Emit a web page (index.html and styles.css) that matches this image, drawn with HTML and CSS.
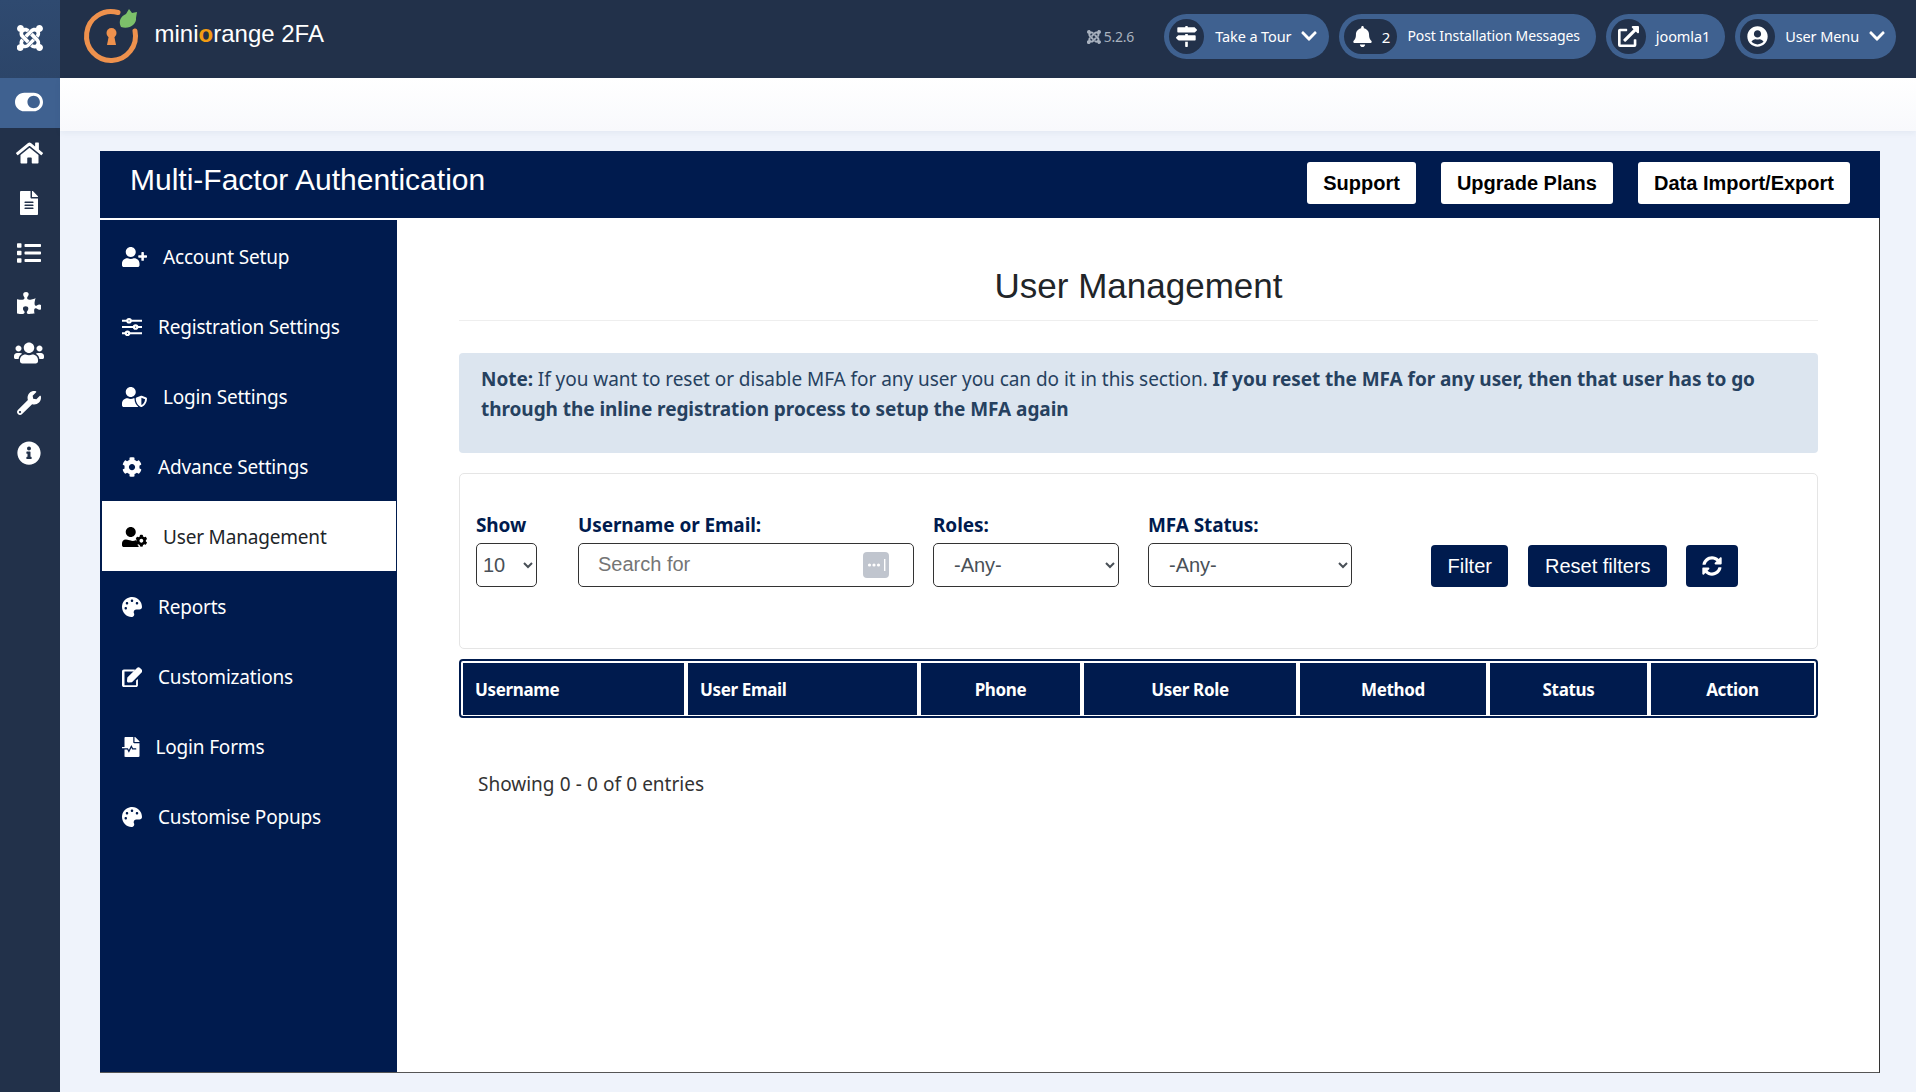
FILE: index.html
```html
<!DOCTYPE html>
<html lang="en">
<head>
<meta charset="utf-8">
<title>miniOrange 2FA</title>
<link rel="stylesheet" href="styles.css">
</head>
<body>
<svg class="defs" aria-hidden="true">
<defs>
<symbol id="i-joomla" viewBox="0 0 448 512"><path d="M.6 92.1C.6 58.8 27.4 32 60.4 32c30 0 54.5 21.9 59.2 50.2 32.6-7.6 67.1.6 96.5 30l-44.3 44.3c-20.5-20.5-42.6-16.3-55.4-3.5-14.3 14.3-14.3 37.9 0 52.2l99.5 99.5-44 44.3c-87.7-87.2-49.7-49.7-99.8-99.7-26.8-26.5-35-64.8-24.8-98.9C20.4 144.6.6 120.7.6 92.1zm129.5 116.4l44.3 44.3c10-10 89.7-89.7 99.7-99.8 14.3-14.3 37.6-14.3 51.9 0 12.8 12.8 17 35-3.5 55.4l44 44.3c31.2-31.2 38.5-67.6 28.9-101.2 29.2-4.1 51.9-29.2 51.9-59.5 0-33.2-26.8-60.1-59.8-60.1-30.3 0-55.4 22.5-59.5 51.6-33.8-9.9-71.7-1.5-98.3 25.1-18.3 19.1-71.1 71.5-99.6 99.9zm266.3 152.2c8.2-32.7-.9-68.5-26.3-93.9-11.8-12-.6-.8-99.5-99.7l-44.3 44.3 99.7 99.7c14.3 14.3 14.3 37.6 0 51.9-12.8 12.8-35 17-55.4-3.5l-44 44.3c27.6 30.2 68 38.8 102.7 28 5.5 27.4 29.7 48.1 58.9 48.1 33 0 59.8-26.8 59.8-60.1 0-30.2-22.5-55-51.6-58.9zm-84.3-53.1l-44-44.3c-87.2 87.4-50.4 50.4-99.7 99.8-14.3 14.3-37.6 14.3-51.9 0-13.1-13.4-16.9-35.3 3.2-55.4l-44-44.3c-30.2 30.2-38 65.2-29.5 98.3-29.6 3.9-52.3 29.2-52.3 59.5 0 33.2 26.8 60.1 60.1 60.1 30.3 0 55.1-22.5 59.2-51.6 33.9 9.9 71.4 1.5 98.2-25.1 50-50 12.6-12.6 100.7-100.5z"/></symbol>
<symbol id="i-chev" viewBox="0 0 448 512"><path d="M207.029 381.476L12.686 187.132c-9.373-9.373-9.373-24.569 0-33.941l22.667-22.667c9.357-9.357 24.522-9.375 33.901-.04L224 284.505l154.745-154.021c9.379-9.335 24.544-9.317 33.901.04l22.667 22.667c9.373 9.373 9.373 24.569 0 33.941L240.971 381.476c-9.373 9.372-24.569 9.372-33.942 0z"/></symbol>
<symbol id="i-palette" viewBox="0 0 512 512"><path d="M204.3 5C104.9 24.4 24.8 104.3 5.2 203.4c-37 187 131.7 326.4 258.8 306.7 41.2-6.4 61.4-54.6 42.5-91.7-23.1-45.4 9.9-98.4 60.9-98.4h79.7c35.8 0 64.8-29.6 64.9-65.3C511.5 97.1 368.1-26.9 204.3 5zM96 320c-17.7 0-32-14.3-32-32s14.3-32 32-32 32 14.3 32 32-14.3 32-32 32zm32-128c-17.7 0-32-14.3-32-32s14.3-32 32-32 32 14.3 32 32-14.3 32-32 32zm128-64c-17.7 0-32-14.3-32-32s14.3-32 32-32 32 14.3 32 32-14.3 32-32 32zm128 64c-17.7 0-32-14.3-32-32s14.3-32 32-32 32 14.3 32 32-14.3 32-32 32z"/></symbol>
</defs>
</svg>

<header class="topbar">
  <div class="brand-square"><svg class="brand-joomla"><use href="#i-joomla"/></svg></div>
  <div class="logo">
    <svg class="logo-mark" viewBox="0 0 60 60">
      <path class="logo-ring" d="M37 6.5A24.5 24.5 0 1 0 54 25"/>
      <circle class="logo-key" cx="30.5" cy="27" r="5"/>
      <path class="logo-key" d="M28 29h5l2 10h-9z"/>
      <path class="logo-leaf" d="M40 21c-3-6 0-11 5-13l3-5 3 4 5-1-1 6c1 6-7 12-15 9z"/>
    </svg>
    <span class="logo-text">mini<b>o</b>range 2FA</span>
  </div>
  <div class="top-actions">
    <span class="version"><svg class="version-icon"><use href="#i-joomla"/></svg>5.2.6</span>
    <a class="pill pill-tour">
      <span class="pill-icon"><svg class="pi" viewBox="0 0 512 512"><path d="M507.31 84.69L464 41.37c-6-6-14.14-9.37-22.63-9.37H288V16c0-8.84-7.16-16-16-16h-32c-8.84 0-16 7.16-16 16v16H56c-13.25 0-24 10.75-24 24v80c0 13.25 10.75 24 24 24h385.37c8.49 0 16.62-3.37 22.63-9.37l43.31-43.31c6.25-6.26 6.25-16.38 0-22.63zM224 496c0 8.84 7.16 16 16 16h32c8.84 0 16-7.16 16-16V384h-64v112zm232-272H288v-32h-64v32H70.63c-8.49 0-16.62 3.37-22.63 9.37L4.69 276.69c-6.25 6.25-6.25 16.38 0 22.63L48 342.63c6 6 14.14 9.37 22.63 9.37H456c13.25 0 24-10.75 24-24v-80c0-13.25-10.75-24-24-24z"/></svg></span>
      <span class="pill-text">Take a Tour</span>
      <svg class="chev"><use href="#i-chev"/></svg>
    </a>
    <a class="pill pill-post">
      <span class="pill-icon pill-icon-wide"><svg class="pi" viewBox="0 0 448 512"><path d="M224 512c35.32 0 63.97-28.65 63.97-64H160.03c0 35.35 28.65 64 63.97 64zm215.39-149.71c-19.32-20.76-55.47-51.99-55.47-154.29 0-77.7-54.48-139.9-127.94-155.16V32c0-17.67-14.32-32-31.98-32s-31.98 14.33-31.98 32v20.84C118.56 68.1 64.08 130.3 64.08 208c0 102.3-36.15 133.53-55.47 154.29-6 6.45-8.66 14.16-8.61 21.71.11 16.4 12.98 32 32.1 32h383.8c19.12 0 32-15.6 32.1-32 .05-7.55-2.61-15.27-8.61-21.71z"/></svg>2</span>
      <span class="pill-text">Post Installation Messages</span>
    </a>
    <a class="pill pill-site">
      <span class="pill-icon"><svg class="pi" viewBox="0 0 512 512"><path d="M432,320H400a16,16,0,0,0-16,16V448H64V128H208a16,16,0,0,0,16-16V80a16,16,0,0,0-16-16H48A48,48,0,0,0,0,112V464a48,48,0,0,0,48,48H400a48,48,0,0,0,48-48V336A16,16,0,0,0,432,320ZM488,0h-128c-21.37,0-32.05,25.91-17,41l35.73,35.73L135,320.37a24,24,0,0,0,0,34L157.67,377a24,24,0,0,0,34,0L435.28,133.32,471,169c15,15,41,4.5,41-17V24A24,24,0,0,0,488,0Z"/></svg></span>
      <span class="pill-text">joomla1</span>
    </a>
    <a class="pill pill-user">
      <span class="pill-icon"><svg class="pi" viewBox="0 0 496 512"><path d="M248 8C111 8 0 119 0 256s111 248 248 248 248-111 248-248S385 8 248 8zm0 96c48.6 0 88 39.4 88 88s-39.4 88-88 88-88-39.4-88-88 39.4-88 88-88zm0 344c-58.7 0-111.3-26.6-146.5-68.2 18.8-35.4 55.6-59.8 98.5-59.8 2.4 0 4.8.4 7.1 1.1 13 4.2 26.6 6.9 40.9 6.9 14.3 0 28-2.7 40.9-6.9 2.3-.7 4.7-1.1 7.1-1.1 42.9 0 79.7 24.4 98.5 59.8C359.3 421.4 306.7 448 248 448z"/></svg></span>
      <span class="pill-text">User Menu</span>
      <svg class="chev"><use href="#i-chev"/></svg>
    </a>
  </div>
</header>

<div class="shell">
  <nav class="rail">
    <a class="rail-toggle"><svg class="rail-icon" viewBox="0 0 576 512"><path d="M384 64H192C86 64 0 150 0 256s86 192 192 192h192c106 0 192-86 192-192S490 64 384 64zm0 320c-70.8 0-128-57.3-128-128 0-70.8 57.3-128 128-128 70.8 0 128 57.3 128 128 0 70.8-57.3 128-128 128z"/></svg></a>
    <a class="rail-item"><svg class="rail-icon" viewBox="0 0 576 512"><path d="M280.37 148.26L96 300.11V464a16 16 0 0 0 16 16l112.06-.29a16 16 0 0 0 15.92-16V368a16 16 0 0 1 16-16h64a16 16 0 0 1 16 16v95.64a16 16 0 0 0 16 16.05L464 480a16 16 0 0 0 16-16V300L295.67 148.26a12.19 12.19 0 0 0-15.3 0zM571.6 251.47L488 182.56V44.05a12 12 0 0 0-12-12h-56a12 12 0 0 0-12 12v72.61L318.47 43a48 48 0 0 0-61 0L4.34 251.47a12 12 0 0 0-1.6 16.9l25.5 31A12 12 0 0 0 45.15 301l235.22-193.74a12.19 12.19 0 0 1 15.3 0L530.9 301a12 12 0 0 0 16.9-1.6l25.5-31a12 12 0 0 0-1.7-16.93z"/></svg></a>
    <a class="rail-item"><svg class="rail-icon" viewBox="0 0 384 512"><path d="M224 136V0H24C10.7 0 0 10.7 0 24v464c0 13.3 10.7 24 24 24h336c13.3 0 24-10.7 24-24V160H248c-13.2 0-24-10.8-24-24zm64 236c0 6.6-5.4 12-12 12H108c-6.6 0-12-5.4-12-12v-8c0-6.6 5.4-12 12-12h168c6.6 0 12 5.4 12 12v8zm0-64c0 6.6-5.4 12-12 12H108c-6.6 0-12-5.4-12-12v-8c0-6.6 5.4-12 12-12h168c6.6 0 12 5.4 12 12v8zm0-72v8c0 6.6-5.4 12-12 12H108c-6.6 0-12-5.4-12-12v-8c0-6.6 5.4-12 12-12h168c6.6 0 12 5.4 12 12zm96-114.1v6.1H256V0h6.1c6.4 0 12.5 2.5 17 7l97.9 98c4.5 4.5 7 10.6 7 16.9z"/></svg></a>
    <a class="rail-item"><svg class="rail-icon" viewBox="0 0 512 512"><path d="M80 368H16a16 16 0 0 0-16 16v64a16 16 0 0 0 16 16h64a16 16 0 0 0 16-16v-64a16 16 0 0 0-16-16zm0-320H16A16 16 0 0 0 0 64v64a16 16 0 0 0 16 16h64a16 16 0 0 0 16-16V64a16 16 0 0 0-16-16zm0 160H16a16 16 0 0 0-16 16v64a16 16 0 0 0 16 16h64a16 16 0 0 0 16-16v-64a16 16 0 0 0-16-16zm416 176H176a16 16 0 0 0-16 16v32a16 16 0 0 0 16 16h320a16 16 0 0 0 16-16v-32a16 16 0 0 0-16-16zm0-320H176a16 16 0 0 0-16 16v32a16 16 0 0 0 16 16h320a16 16 0 0 0 16-16V80a16 16 0 0 0-16-16zm0 160H176a16 16 0 0 0-16 16v32a16 16 0 0 0 16 16h320a16 16 0 0 0 16-16v-32a16 16 0 0 0-16-16z"/></svg></a>
    <a class="rail-item"><svg class="rail-icon rail-icon-puzzle" viewBox="0 0 576 512"><path d="M519.442 288.651c-41.519 0-59.5 31.593-82.058 31.593C377.409 320.244 432 144 432 144s-196.288 80-196.288-3.297c0-35.827 36.288-46.25 36.288-85.985C272 19.216 243.885 0 210.539 0c-34.654 0-66.366 18.891-66.366 56.346 0 41.364 31.711 59.277 31.711 81.75C175.885 207.719 0 166.758 0 166.758v333.237s178.635 41.047 178.635-28.662c0-22.473-40-40.107-40-81.471 0-37.456 29.25-56.346 63.577-56.346 33.673 0 61.788 19.216 61.788 54.717 0 39.735-36.288 50.158-36.288 85.985 0 60.803 129.675 25.73 181.23 25.73 0 0-34.725-120.101 25.827-120.101 35.962 0 46.222 36.152 86.308 36.152C556.712 416 576 387.99 576 354.443c0-34.199-18.962-65.792-56.558-65.792z"/></svg></a>
    <a class="rail-item"><svg class="rail-icon" viewBox="0 0 640 512"><path d="M96 224c35.3 0 64-28.7 64-64s-28.7-64-64-64-64 28.7-64 64 28.7 64 64 64zm448 0c35.3 0 64-28.7 64-64s-28.7-64-64-64-64 28.7-64 64 28.7 64 64 64zm32 32h-64c-17.6 0-33.5 7.1-45.1 18.6 40.3 22.1 68.9 62 75.1 109.4h66c17.7 0 32-14.3 32-32v-32c0-35.3-28.7-64-64-64zm-256 0c61.9 0 112-50.1 112-112S381.9 32 320 32 208 82.1 208 144s50.1 112 112 112zm76.8 32h-8.3c-20.8 10-43.9 16-68.5 16s-47.6-6-68.5-16h-8.3C179.6 288 128 339.6 128 403.2V432c0 26.5 21.5 48 48 48h288c26.5 0 48-21.5 48-48v-28.8c0-63.6-51.6-115.2-115.2-115.2zm-223.7-13.4C161.5 263.1 145.6 256 128 256H64c-35.3 0-64 28.7-64 64v32c0 17.7 14.3 32 32 32h65.9c6.3-47.4 34.9-87.3 75.2-109.4z"/></svg></a>
    <a class="rail-item"><svg class="rail-icon" viewBox="0 0 512 512"><path d="M507.73 109.1c-2.24-9.03-13.54-12.09-20.12-5.51l-74.36 74.36-67.88-11.31-11.31-67.88 74.36-74.36c6.62-6.62 3.43-17.9-5.66-20.16-47.38-11.74-99.55.91-136.58 37.93-39.64 39.64-50.55 97.1-34.05 147.2L18.74 402.76c-24.99 24.99-24.99 65.51 0 90.5 24.99 24.99 65.51 24.99 90.5 0l213.21-213.21c50.12 16.71 107.47 5.68 147.37-34.22 37.07-37.07 49.7-89.32 37.91-136.73zM64 472c-13.25 0-24-10.75-24-24 0-13.26 10.75-24 24-24s24 10.74 24 24c0 13.25-10.75 24-24 24z"/></svg></a>
    <a class="rail-item"><svg class="rail-icon" viewBox="0 0 512 512"><path d="M256 8C119.043 8 8 119.083 8 256c0 136.997 111.043 248 248 248s248-111.003 248-248C504 119.083 392.957 8 256 8zm0 110c23.196 0 42 18.804 42 42s-18.804 42-42 42-42-18.804-42-42 18.804-42 42-42zm56 254c0 6.627-5.373 12-12 12h-88c-6.627 0-12-5.373-12-12v-24c0-6.627 5.373-12 12-12h12v-64h-12c-6.627 0-12-5.373-12-12v-24c0-6.627 5.373-12 12-12h64c6.627 0 12 5.373 12 12v100h12c6.627 0 12 5.373 12 12v24z"/></svg></a>
  </nav>

  <div class="page">
    <div class="subbar"></div>
    <section class="panel">
      <div class="panel-head">
        <h1 class="panel-title">Multi-Factor Authentication</h1>
        <div class="head-actions">
          <a class="head-btn">Support</a>
          <a class="head-btn">Upgrade Plans</a>
          <a class="head-btn">Data Import/Export</a>
        </div>
      </div>
      <div class="panel-body">
        <ul class="side">
          <li class="side-item"><svg class="side-icon" viewBox="0 0 640 512"><path d="M624 208h-64v-64c0-8.8-7.2-16-16-16h-32c-8.8 0-16 7.2-16 16v64h-64c-8.8 0-16 7.2-16 16v32c0 8.8 7.2 16 16 16h64v64c0 8.8 7.2 16 16 16h32c8.8 0 16-7.2 16-16v-64h64c8.8 0 16-7.2 16-16v-32c0-8.8-7.2-16-16-16zm-400 48c70.7 0 128-57.3 128-128S294.7 0 224 0 96 57.3 96 128s57.3 128 128 128zm89.6 32h-16.7c-22.2 10.2-46.9 16-72.9 16s-50.6-5.8-72.9-16h-16.7C60.2 288 0 348.2 0 422.4V464c0 26.5 21.5 48 48 48h352c26.5 0 48-21.5 48-48v-41.6c0-74.2-60.2-134.4-134.4-134.4z"/></svg>Account Setup</li>
          <li class="side-item"><svg class="side-icon side-icon-lines" viewBox="0 0 512 512"><path d="M0 96h512M0 256h512M0 416h512"/><circle cx="180" cy="96" r="44"/><circle cx="348" cy="256" r="44"/><circle cx="140" cy="416" r="44"/></svg>Registration Settings</li>
          <li class="side-item"><svg class="side-icon" viewBox="0 0 640 512"><path d="M622.3 271.1l-115.2-45c-4.1-1.6-12.6-3.7-22.2 0l-115.2 45c-10.7 4.2-17.7 14-17.7 24.9 0 111.6 68.7 188.8 132.9 213.9 9.6 3.7 18 1.6 22.2 0C558.4 489.9 640 420.5 640 296c0-10.9-7-20.7-17.7-24.9zM496 462.4V273.3l95.5 37.3c-5.6 87.1-60.9 135.4-95.5 151.8zM224 256c70.7 0 128-57.3 128-128S294.7 0 224 0 96 57.3 96 128s57.3 128 128 128zm96 40c0-2.5.8-4.7 1.1-7.2-2.5-.1-4.9-.8-7.5-.8h-16.7c-22.2 10.2-46.9 16-72.9 16s-50.6-5.8-72.9-16h-16.7C60.2 288 0 348.2 0 422.4V464c0 26.5 21.5 48 48 48h352c6.8 0 13.3-1.5 19.2-4-54-42.9-99.2-116.7-99.2-212z"/></svg>Login Settings</li>
          <li class="side-item"><svg class="side-icon" viewBox="0 0 512 512"><path d="M487.4 315.7l-42.6-24.6c4.3-23.2 4.3-47 0-70.2l42.6-24.6c4.9-2.8 7.1-8.6 5.5-14-11.1-35.6-30-67.8-54.7-94.6-3.8-4.1-10-5.1-14.8-2.3L380.8 110c-17.9-15.4-38.5-27.3-60.8-35.1V25.8c0-5.6-3.9-10.5-9.4-11.7-36.7-8.2-74.3-7.8-109.2 0-5.5 1.2-9.4 6.1-9.4 11.7V75c-22.2 7.9-42.8 19.8-60.8 35.1L88.7 85.5c-4.9-2.8-11-1.9-14.8 2.3-24.7 26.7-43.6 58.9-54.7 94.6-1.7 5.4.6 11.2 5.5 14L67.3 221c-4.3 23.2-4.3 47 0 70.2l-42.6 24.6c-4.9 2.8-7.1 8.6-5.5 14 11.1 35.6 30 67.8 54.7 94.6 3.8 4.1 10 5.1 14.8 2.3l42.6-24.6c17.9 15.4 38.5 27.3 60.8 35.1v49.2c0 5.6 3.9 10.5 9.4 11.7 36.7 8.2 74.3 7.8 109.2 0 5.5-1.2 9.4-6.1 9.4-11.7v-49.2c22.2-7.9 42.8-19.8 60.8-35.1l42.6 24.6c4.9 2.8 11 1.9 14.8-2.3 24.7-26.7 43.6-58.9 54.7-94.6 1.5-5.5-.7-11.3-5.6-14.1zM256 336c-44.1 0-80-35.9-80-80s35.9-80 80-80 80 35.9 80 80-35.9 80-80 80z"/></svg>Advance Settings</li>
          <li class="side-item side-item-active"><svg class="side-icon" viewBox="0 0 640 512"><path d="M610.5 373.3c2.6-14.1 2.6-28.5 0-42.6l25.8-14.9c3-1.7 4.3-5.2 3.3-8.5-6.7-21.6-18.2-41.2-33.2-57.4-2.3-2.5-6-3.1-9-1.4l-25.8 14.9c-10.9-9.3-23.4-16.5-36.9-21.3v-29.8c0-3.4-2.4-6.4-5.7-7.1-22.3-5-45-4.8-66.2 0-3.3.7-5.7 3.7-5.7 7.1v29.8c-13.5 4.8-26 12-36.9 21.3l-25.8-14.9c-2.9-1.7-6.7-1.1-9 1.4-15 16.2-26.5 35.8-33.2 57.4-1 3.3.4 6.8 3.3 8.5l25.8 14.9c-2.6 14.1-2.6 28.5 0 42.6l-25.8 14.9c-3 1.7-4.3 5.2-3.3 8.5 6.7 21.6 18.2 41.1 33.2 57.4 2.3 2.5 6 3.1 9 1.4l25.8-14.9c10.9 9.3 23.4 16.5 36.9 21.3v29.8c0 3.4 2.4 6.4 5.7 7.1 22.3 5 45 4.8 66.2 0 3.3-.7 5.7-3.7 5.7-7.1v-29.8c13.5-4.8 26-12 36.9-21.3l25.8 14.9c2.9 1.7 6.7 1.1 9-1.4 15-16.2 26.5-35.8 33.2-57.4 1-3.3-.4-6.8-3.3-8.5l-25.8-14.9zM496 400.5c-26.8 0-48.5-21.8-48.5-48.5s21.8-48.5 48.5-48.5 48.5 21.8 48.5 48.5-21.7 48.5-48.5 48.5zM224 256c70.7 0 128-57.3 128-128S294.7 0 224 0 96 57.3 96 128s57.3 128 128 128zm201.2 226.5c-2.3 0-4.6-.3-6.8-1-3.6-1.1-6.8-3-9.5-5.7-15.7-17-27.8-37.8-35-60.4-2.6-8.2.6-17.2 8.2-21.6l7.9-4.6c-.4-3.3-.4-6.7 0-10l-7.9-4.6c-7.5-4.3-10.8-13.4-8.2-21.6 1.2-3.8 3-7.4 4.7-11-4-.6-8-.9-12.2-.9h-16.7c-22.2 10.2-46.9 16-72.9 16s-50.6-5.8-72.9-16h-16.7C60.2 288 0 348.2 0 422.4V464c0 26.5 21.5 48 48 48h352c10.1 0 19.5-3.2 27.2-8.5-.7-3.2-2-21-2-21z"/></svg>User Management</li>
          <li class="side-item"><svg class="side-icon"><use href="#i-palette"/></svg>Reports</li>
          <li class="side-item"><svg class="side-icon" viewBox="0 0 512 512"><path d="M362.3 344.9l32-32c5-5 13.7-1.5 13.7 5.7V464c0 26.5-21.5 48-48 48H48c-26.5 0-48-21.5-48-48V112c0-26.5 21.5-48 48-48h273.5c7.1 0 10.7 8.6 5.7 13.7l-32 32c-1.5 1.5-3.5 2.3-5.7 2.3H64v352h296V350.5c0-2.1.8-4.1 2.3-5.6zM502 142L255 389l-85 9.4c-24.7 2.7-45.6-18-42.9-42.9l9.4-85L383.4 23.6c21.5-21.5 56.4-21.5 77.9 0l40.7 40.7c21.5 21.6 21.5 56.5 0 77.7z"/></svg>Customizations</li>
          <li class="side-item"><svg class="side-icon" viewBox="0 0 448 512"><path d="M288 136V0H88C74.7 0 64 10.7 64 24v232H8c-4.4 0-8 3.6-8 8v16c0 4.4 3.6 8 8 8h140.9c3 0 5.8 1.7 7.2 4.4l19.9 39.8 56.8-113.7c2.9-5.9 11.4-5.9 14.3 0l34.7 69.5H352c8.8 0 16 7.2 16 16s-7.2 16-16 16h-89.9L240 275.8l-56.8 113.7c-2.9 5.9-11.4 5.9-14.3 0L134.1 320H64v168c0 13.3 10.7 24 24 24h336c13.3 0 24-10.7 24-24V160H312c-13.2 0-24-10.8-24-24zm153-31L343.1 7c-4.5-4.5-10.6-7-17-7H320v128h128v-6.1c0-6.3-2.5-12.4-7-16.9z"/></svg>Login Forms</li>
          <li class="side-item"><svg class="side-icon"><use href="#i-palette"/></svg>Customise Popups</li>
        </ul>
        <main class="content">
          <h2 class="content-title">User Management</h2>
          <div class="note"><b>Note:</b> If you want to reset or disable MFA for any user you can do it in this section. <b>If you reset the MFA for any user, then that user has to go through the inline registration process to setup the MFA again</b></div>
          <form class="filters">
            <label class="field field-show"><span class="field-label">Show</span>
              <select class="control"><option>10</option></select></label>
            <label class="field field-search"><span class="field-label">Username or Email:</span>
              <span class="search-wrap"><input class="control search" type="text" placeholder="Search for">
              <svg class="search-key" viewBox="0 0 26 26"><rect width="26" height="26" rx="4"/><circle cx="6.5" cy="13" r="1.6"/><circle cx="11" cy="13" r="1.6"/><circle cx="15.5" cy="13" r="1.6"/><rect x="21" y="7" width="1.4" height="12"/></svg></span></label>
            <label class="field field-roles"><span class="field-label">Roles:</span>
              <select class="control pad"><option>-Any-</option></select></label>
            <label class="field field-status"><span class="field-label">MFA Status:</span>
              <select class="control pad"><option>-Any-</option></select></label>
            <div class="filter-btns">
              <button class="btn" type="button">Filter</button>
              <button class="btn" type="button">Reset filters</button>
              <button class="btn btn-icon" type="button" aria-label="Refresh"><svg class="sync" viewBox="0 0 512 512"><path d="M370.72 133.28C339.458 104.008 298.888 87.962 255.848 88c-77.458.068-144.328 53.178-162.791 126.85-1.344 5.363-6.122 9.15-11.651 9.15H24.103c-7.498 0-13.194-6.807-11.807-14.176C33.933 94.924 134.813 8 256 8c66.448 0 126.791 26.136 171.315 68.685L463.03 40.97C478.149 25.851 504 36.559 504 57.941V192c0 13.255-10.745 24-24 24H345.941c-21.382 0-32.09-25.851-16.971-40.971l41.75-41.749zM32 296h134.059c21.382 0 32.09 25.851 16.971 40.971l-41.75 41.75c31.262 29.273 71.835 45.319 114.876 45.28 77.418-.07 144.315-53.144 162.787-126.849 1.344-5.363 6.122-9.15 11.651-9.15h57.304c7.498 0 13.194 6.807 11.807 14.176C478.067 417.076 377.187 504 256 504c-66.448 0-126.791-26.136-171.315-68.685L48.97 471.03C33.851 486.149 8 475.441 8 454.059V320c0-13.255 10.745-24 24-24z"/></svg></button>
            </div>
          </form>
          <div class="table-box">
            <table class="users">
              <thead><tr>
                <th class="left c1">Username</th><th class="left c2">User Email</th><th class="c3">Phone</th><th class="c4">User Role</th><th class="c5">Method</th><th class="c6">Status</th><th class="c7">Action</th>
              </tr></thead>
            </table>
          </div>
          <p class="entries">Showing 0 - 0 of 0 entries</p>
        </main>
      </div>
    </section>
  </div>
</div>
</body>
</html>
```

FILE: styles.css
```css
* { box-sizing: border-box; }
html, body { margin: 0; height: 1092px; overflow: hidden; }
body {
  display: flex;
  flex-direction: column;
  background: #eff3fb;
  font-family: "Noto Sans", "Open Sans", sans-serif;
  color: #212529;
}
.defs { display: none; }

/* top bar */
.topbar { height: 78px; flex: none; display: flex; align-items: center; background: #22314a; }
.brand-square {
  width: 60px; height: 78px; flex: none;
  display: flex; align-items: center; justify-content: center;
  background: linear-gradient(#2f4a70, #2c4569);
}
.brand-joomla { width: 26px; height: 30px; fill: #fff; margin-top: -2px; }
.logo { display: flex; align-items: center; margin-left: 21px; }
.logo-mark { width: 60px; height: 60px; flex: none; margin-top: -6px; }
.logo-ring { fill: none; stroke: #ee914d; stroke-width: 5; stroke-linecap: round; }
.logo-key { fill: #ee914d; }
.logo-leaf { fill: #7cc06a; }
.logo-text { margin-left: 13.5px; margin-top: -10px; font: 24px/30px "Liberation Sans", Arial, sans-serif; color: #fff; }
.logo-text b { color: #f39c12; font-weight: 700; }
.top-actions { margin: -5px 20px 0 auto; display: flex; align-items: center; gap: 10px; }
.version { display: flex; align-items: center; gap: 3px; margin-right: 20px; font-size: 14px; color: #a9b2bf; letter-spacing: -.2px; }
.version-icon { width: 14px; height: 16px; fill: #a9b2bf; }
.pill {
  height: 45px; border-radius: 23px;
  display: flex; align-items: center;
  padding: 0 12px 0 5px;
  background: #3f6190; color: #fff;
  font-size: 14.5px; letter-spacing: -.1px;
}
.pill-tour .pill-text { margin-left: 11px; }
.pill-post { padding-right: 16px; font-size: 14px; }
.pill-site { padding-right: 15px; }
.pill-user { padding-right: 11px; }
.pill-icon {
  width: 35px; height: 35px; border-radius: 18px; flex: none;
  display: flex; align-items: center; justify-content: center; gap: 9px;
  background: #22314a; color: #fff; font-size: 15px;
}
.pill-icon-wide { width: 53px; }
.pi { width: 21px; height: 21px; fill: #fff; flex: none; }
.pill-text { margin: -2px 0 0 10px; white-space: nowrap; }
.chev { width: 16px; height: 18px; margin: -2px 0 0 10px; fill: #fff; flex: none; }

/* shell */
.shell { flex: 1; display: flex; min-height: 0; }
.rail { width: 60px; flex: none; background: #22314a; display: flex; flex-direction: column; }
.rail-toggle { height: 50px; flex: none; display: flex; align-items: center; justify-content: center; padding: 0 2px 2px 0; background: #3f6190; }
.rail-item { height: 50px; flex: none; display: flex; align-items: center; justify-content: center; padding-right: 2px; }
.rail-icon { height: 24px; width: auto; max-width: 30px; fill: #fff; flex: none; }
.rail-icon[viewBox="0 0 576 512"] { aspect-ratio: 9 / 8; }
.rail-icon[viewBox="0 0 640 512"] { aspect-ratio: 5 / 4; }
.rail-icon-puzzle { height: 22px; }
.rail-toggle .rail-icon { width: 28px; height: 28px; max-width: none; }

.page { flex: 1; min-width: 0; display: flex; flex-direction: column; }
.subbar { height: 53px; flex: none; background: linear-gradient(#fff, #f8f9fc); box-shadow: 0 2px 6px rgba(40, 60, 110, .06); }
.panel { flex: 1; min-height: 0; margin: 20px 36px 19px 40px; display: flex; flex-direction: column; }
.panel-head { height: 67px; flex: none; display: flex; align-items: center; justify-content: space-between; padding: 0 30px; background: #001b4e; }
.panel-title { margin: -10px 0 0; font: 400 30px/36px "Liberation Sans", Arial, sans-serif; color: #fff; }
.head-actions { display: flex; gap: 25px; margin-top: -3px; }
.head-btn {
  height: 42px; padding: 0 16px; border-radius: 3px;
  display: flex; align-items: center;
  background: #fff; color: #000;
  font: 700 20px/42px "Liberation Sans", Arial, sans-serif;
}
.panel-body { flex: 1; min-height: 0; display: flex; background: #fff; border-right: 1px solid #333; border-bottom: 1px solid #555; }

/* side menu */
.side {
  width: 297px; flex: none; margin: 2px 0 0; padding: 2px 1px 0 2px; list-style: none;
  background: #001b4e;
}
.side-item {
  height: 70px; display: flex; align-items: center; gap: 16px; padding-left: 20px;
  color: #fff; font-size: 19px; letter-spacing: -.18px;
}
.side-item-active { margin: -1px 0 1px; padding-top: 2px; background: #fff; color: #212529; }
.side-icon { height: 20px; width: auto; fill: #fff; flex: none; aspect-ratio: 1 / 1; }
.side-icon[viewBox="0 0 640 512"] { aspect-ratio: 5 / 4; }
.side-icon[viewBox="0 0 448 512"] { aspect-ratio: 7 / 8; }
.side-item-active .side-icon { fill: #000; }
.side-icon-lines { fill: #001b4e; stroke: #fff; stroke-width: 56; }

/* content */
.content { flex: 1; min-width: 0; padding: 47px 61px 0 62px; }
.content-title {
  margin: 0 0 32px; padding-bottom: 13px;
  border-bottom: 1px solid #eee;
  text-align: center;
  font: 400 35px/42px "Liberation Sans", Arial, sans-serif; color: #212529;
}
.note {
  height: 100px; padding: 11px 22px 0; border-radius: 4px;
  background: #dce5ef; color: #26415f;
  font-size: 19px; line-height: 30px; letter-spacing: -.055px;
}
.filters {
  height: 176px; margin-top: 20px; padding: 39px 16px 0;
  border: 1px solid #e5e5e5; border-radius: 5px;
  display: flex; align-items: flex-start;
}
.field { display: flex; flex-direction: column; flex: none; }
.field-label { height: 30px; line-height: 24px; font-size: 19px; font-weight: 700; letter-spacing: -.1px; color: #001b4e; white-space: nowrap; }
.field-show { width: 61px; }
.field-search { width: 336px; margin-left: 41px; }
.field-roles { width: 186px; margin-left: 19px; }
.field-status { width: 204px; margin-left: 29px; }
.control {
  width: 100%; height: 44px; border: 1px solid #333; border-radius: 5px; background: #fff;
  padding: 0 0 0 2px; color: #495057;
  font: 20px "Liberation Sans", Arial, sans-serif;
}
.control.pad { padding-left: 16px; }
.search { padding: 0 0 2px 19px; }
.search::placeholder { color: #757575; opacity: 1; }
.search-wrap { position: relative; display: block; }
.search-key { position: absolute; right: 25px; top: 9px; width: 26px; height: 26px; }
.search-key rect:first-child { fill: #c0c5ce; }
.search-key circle, .search-key rect + circle ~ rect { fill: #fff; }
.filter-btns { margin: 32px 0 0 79px; display: flex; gap: 20px; }
.btn {
  height: 42px; padding: 0 16.5px; border: 0; border-radius: 4px;
  background: #001b4e; color: #fff;
  font: 20px "Liberation Sans", Arial, sans-serif;
}
.btn-icon { width: 52px; margin-left: -1px; padding: 0; display: flex; align-items: center; justify-content: center; }
.sync { width: 20px; height: 20px; fill: #fff; }
.table-box { height: 59px; margin-top: 10px; border: 2px solid #001b4e; border-radius: 4px; overflow: hidden; }
.users { width: 1359px; margin: 0 -2px; table-layout: fixed; border-collapse: separate; border-spacing: 4px 2px; }
.users th {
  height: 52px; padding: 0; background: #001b4e; color: #fff;
  font-size: 17px; font-weight: 700; letter-spacing: -.35px; text-align: center;
}
.users th.left { text-align: left; padding-left: 12px; }
.c1 { width: 221px; } .c2 { width: 229px; } .c3 { width: 159px; } .c4 { width: 212px; }
.c5 { width: 186px; } .c6 { width: 157px; } .c7 { width: 163px; }
.entries { margin: 51px 0 0 19px; font-size: 19px; line-height: 30px; word-spacing: .2px; color: #333; }
```
